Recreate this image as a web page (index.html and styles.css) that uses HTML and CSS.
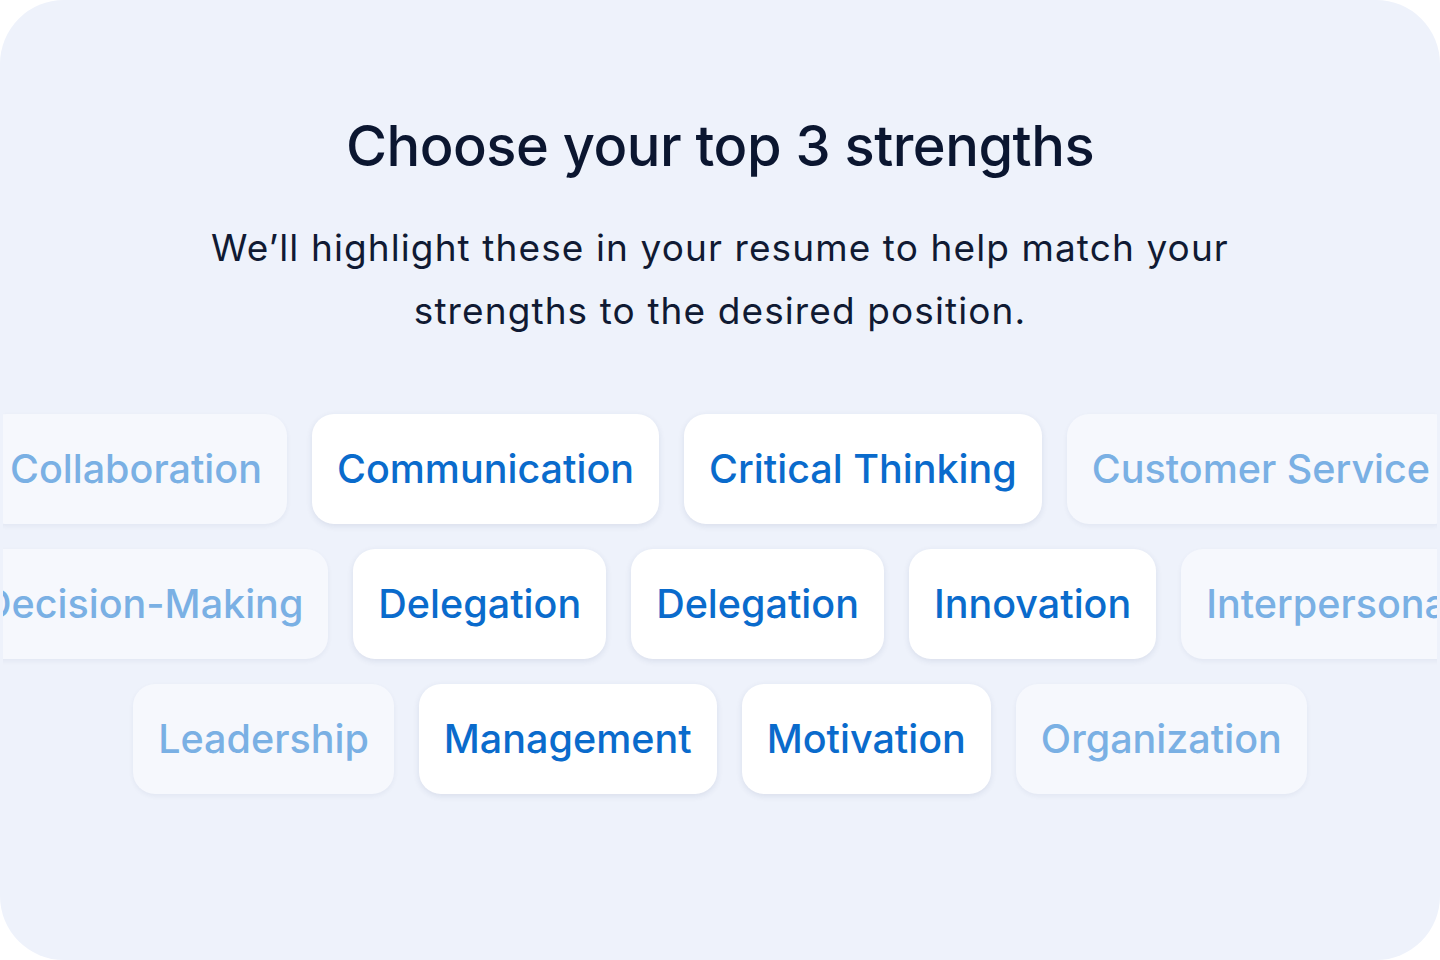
FILE: index.html
```html
<!DOCTYPE html>
<html lang="en">
<head>
  <meta charset="UTF-8">
  <meta name="viewport" content="width=device-width, initial-scale=1.0">
  <title>Strengths</title>
  <link rel="stylesheet" href="styles.css">
</head>
<body>

<div class="panel">
  <h1 class="title">Choose your top 3 strengths</h1>
  <p class="subtitle">We’ll highlight these in your resume to help match your<br>strengths to the desired position.</p>

  <div class="chips">
    <div class="chip-row">
      <span class="chip faded">Collaboration</span>
      <span class="chip">Communication</span>
      <span class="chip">Critical Thinking</span>
      <span class="chip faded">Customer Service</span>
    </div>
    <div class="chip-row">
      <span class="chip faded">Decision-Making</span>
      <span class="chip">Delegation</span>
      <span class="chip">Delegation</span>
      <span class="chip">Innovation</span>
      <span class="chip faded">Interpersonal</span>
    </div>
    <div class="chip-row">
      <span class="chip faded">Leadership</span>
      <span class="chip">Management</span>
      <span class="chip">Motivation</span>
      <span class="chip faded">Organization</span>
    </div>
  </div>
</div>

</body>
</html>
```

FILE: styles.css
```css
* {
  box-sizing: border-box;
  margin: 0;
  padding: 0;
}

body {
  background: #ffffff;
  font-family: 'Inter', 'Noto Sans', sans-serif;
}

.panel {
  width: 1440px;
  height: 960px;
  background: #eef2fb;
  border-radius: 64px;
  overflow: hidden;
  padding-top: 108px;
  text-align: center;
}

.title {
  font-size: 56px;
  font-weight: 500;
  line-height: 76px;
  color: #0b1630;
  letter-spacing: -0.5px;
}

.subtitle {
  margin-top: 32px;
  font-size: 37px;
  font-weight: 400;
  line-height: 63px;
  letter-spacing: 1.1px;
  color: #101a33;
}

.chips {
  margin: 66px 3px 0;
  overflow: hidden;
  display: flex;
  flex-direction: column;
  gap: 25px;
  padding: 6px 0 10px;
}

.chip-row {
  display: flex;
  justify-content: center;
  gap: 25px;
}

.chip {
  flex: none;
  height: 110px;
  padding: 0 25px;
  display: flex;
  align-items: center;
  background: #ffffff;
  border-radius: 22px;
  box-shadow: 0 2px 6px rgba(30, 50, 100, 0.10);
  font-size: 39.5px;
  font-weight: 500;
  color: #0a6bcc;
  white-space: nowrap;
}

.chip.faded {
  background: #f6f8fd;
  color: #7ab0e4;
  box-shadow: 0 2px 5px rgba(30, 50, 100, 0.06);
}
```
